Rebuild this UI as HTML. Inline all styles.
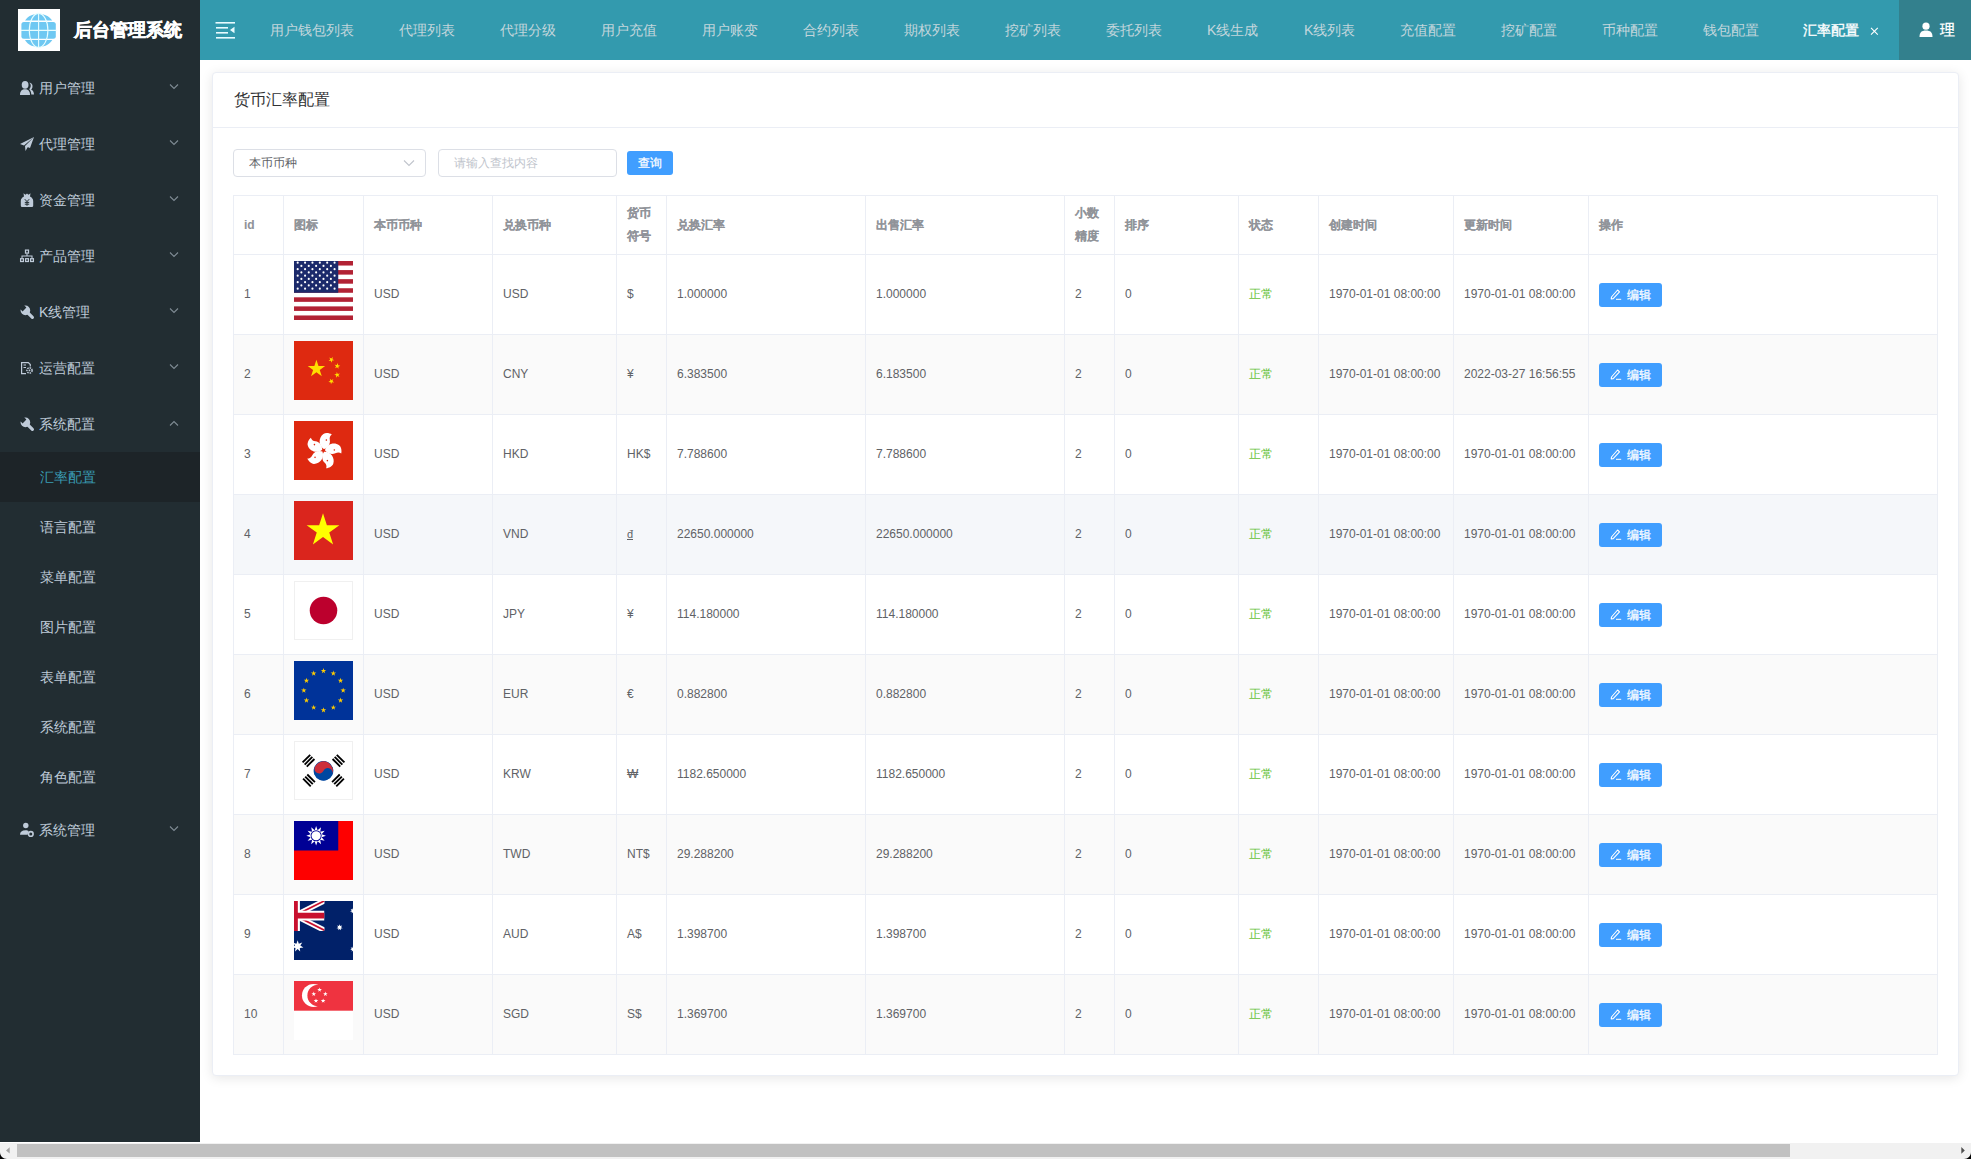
<!DOCTYPE html>
<html><head><meta charset="utf-8"><style>
*{box-sizing:border-box;margin:0;padding:0}
html,body{width:1971px;height:1159px;overflow:hidden;background:#fff;font-family:"Liberation Sans",sans-serif}
#side{position:absolute;left:0;top:0;width:200px;height:1142px;background:#222d32}
#logo{position:absolute;left:18px;top:9px;width:42px;height:42px;background:#fff}
#title{position:absolute;left:74px;top:18px;font-size:18px;font-weight:bold;color:#fff;line-height:24px;white-space:nowrap;-webkit-text-stroke:0.5px #fff}
.mi{position:absolute;left:0;width:200px;height:56px;color:#bfcbd9;font-size:14px}
.mi svg.ic{position:absolute;left:19px;top:20px;width:16px;height:16px}
.mi .tx{position:absolute;left:39px;top:0;line-height:56px;white-space:nowrap}
.mi svg.ar{position:absolute;left:168px;top:20px;width:12px;height:12px}
.mi svg.ar.up{top:21px}
.si{position:absolute;left:0;width:200px;height:50px;color:#bfcbd9;font-size:14px}
.si .tx{position:absolute;left:40px;top:0;line-height:50px;white-space:nowrap}
.si.act{background:#1d2428;color:#3a9db5}
#top{position:absolute;left:200px;top:0;width:1771px;height:60px;background:#339aae}
#user{position:absolute;left:1899px;top:0;width:72px;height:60px;background:#33808d}
.tab{position:absolute;top:0;line-height:60px;font-size:14px;color:#c3d6dc;white-space:nowrap}
.tab.act{color:#fff;-webkit-text-stroke:0.35px #fff}
#card{position:absolute;left:212px;top:72px;width:1747px;height:1004px;border:1px solid #ebeef5;border-radius:4px;background:#fff;box-shadow:0 2px 12px 0 rgba(0,0,0,.1)}
#ch{position:absolute;left:0;top:0;width:100%;height:55px;border-bottom:1px solid #ebeef5}
#ct{position:absolute;left:21px;top:17px;font-size:16px;line-height:20px;color:#303133;white-space:nowrap}
#sel{position:absolute;left:233px;top:149px;width:193px;height:28px;border:1px solid #dcdfe6;border-radius:4px;background:#fff}
#sel .tx{position:absolute;left:15px;top:0;line-height:26px;font-size:12px;color:#606266}
#sel svg{position:absolute;left:169px;top:9px;width:12px;height:8px}
#inp{position:absolute;left:438px;top:149px;width:179px;height:28px;border:1px solid #dcdfe6;border-radius:4px;background:#fff}
#inp .tx{position:absolute;left:15px;top:0;line-height:26px;font-size:12px;color:#c0c4cc}
#qbtn{position:absolute;left:627px;top:151px;width:46px;height:24px;border-radius:3px;background:#409eff;color:#fff;font-size:12px;line-height:24px;text-align:center;-webkit-text-stroke:0.25px #fff}
#tbl{position:absolute;left:233px;top:195px;border-collapse:collapse;table-layout:fixed;width:1705px}
#tbl td,#tbl th{border:1px solid #ebeef5;padding:0 10px;font-size:12px;color:#606266;text-align:left;vertical-align:middle;font-weight:normal;line-height:23px}
#tbl th{color:#909399;font-weight:bold;height:59px;-webkit-text-stroke:0.08px #909399}
#tbl td{height:80px}
#tbl tr.st td{background:#fafafa}
#tbl tr.hv td{background:#f5f7fa}
.ok{color:#67c23a!important}
.eb{display:inline-block;width:63px;height:24px;border-radius:3px;background:#409eff;color:#fff;font-size:12px;line-height:24px;vertical-align:middle;position:relative;top:.5px;padding-left:28px;-webkit-text-stroke:0.25px #fff}
.eb svg{position:absolute;left:11px;top:6px;width:12px;height:12px}
.flag{display:block;width:59px;height:59px;position:relative;top:-4px}
#sb{position:absolute;left:0;top:1142px;width:1971px;height:17px;background:#f1f1f1;border-top:1px solid #fff}
#thumb{position:absolute;left:17px;top:1144px;width:1773px;height:13px;background:#c1c1c1}
</style></head><body>
<div id="side"><div id="logo"><svg viewBox="0 0 42 42" width="42" height="42"><g fill="#6ec8f2"><path d="M7,11.6 C9,8 13,5 20.6,4.9 C28,5 32,8 34.3,11.6 Z"/><rect x="3.4" y="13" width="34.4" height="16.8" rx="2.5"/><path d="M7,31 H34.3 C32,34.6 28,37.8 20.6,38 C13,37.8 9,34.6 7,31 Z"/></g><g fill="none" stroke="#e6fdff" stroke-width="1.1"><ellipse cx="20.6" cy="21.4" rx="9.3" ry="17"/><path d="M20.6,4 V39 M3,21.4 H38.5"/></g></svg></div><div id="title">后台管理系统</div><div class="mi" style="top:60px"><svg class="ic" viewBox="0 0 16 16"><ellipse cx="6.1" cy="4.8" rx="3.4" ry="3.9" fill="#bfcbd9"/><path d="M1,15 C1,11 3,9.3 6,9.3 C9,9.3 11,11 11,15 Z" fill="#bfcbd9"/><path d="M10.3,2.8 C12.6,2.8 14,5 13.4,7.4 C13.1,8.4 12.6,9 12.1,9.4 C14,10.4 15,12 15,14.5 L12.3,14.5 C12.2,12 11.4,10.4 10.2,9.2 C11.6,8 12,6.2 11.6,4.6 C11.3,3.8 10.8,3.2 10.3,2.8 Z" fill="#bfcbd9"/></svg><span class="tx">用户管理</span><svg class="ar" viewBox="0 0 12 12"><path d="M2,4.5 L6,8.5 L10,4.5" fill="none" stroke="#7f8b94" stroke-width="1.1"/></svg></div><div class="mi" style="top:116px"><svg class="ic" viewBox="0 0 16 16"><path d="M15,1 L1,8 L5,9.5 Z M15,1 L6,10 L6.5,15 L8.5,11.5 Z M15,1 L6,10 L11,12 Z" fill="#bfcbd9"/></svg><span class="tx">代理管理</span><svg class="ar" viewBox="0 0 12 12"><path d="M2,4.5 L6,8.5 L10,4.5" fill="none" stroke="#7f8b94" stroke-width="1.1"/></svg></div><div class="mi" style="top:172px"><svg class="ic" viewBox="0 0 16 16"><path d="M4.5,1.3 L6.5,2.8 L8,1.6 L9.5,2.8 L11.5,1.3 L11,4.5 C13,5.5 14.2,7 14.2,9 V13.5 C14.2,14.5 13.5,15 12.5,15 H3.5 C2.5,15 1.8,14.5 1.8,13.5 V9 C1.8,7 3,5.5 5,4.5 Z" fill="#bfcbd9"/><path d="M5.8,7.2 L8,9.6 L10.2,7.2 M8,9.6 V13.8 M5.8,10.4 H10.2 M5.8,12.2 H10.2" stroke="#222d32" stroke-width="1" fill="none"/></svg><span class="tx">资金管理</span><svg class="ar" viewBox="0 0 12 12"><path d="M2,4.5 L6,8.5 L10,4.5" fill="none" stroke="#7f8b94" stroke-width="1.1"/></svg></div><div class="mi" style="top:228px"><svg class="ic" viewBox="0 0 16 16"><rect x="6.5" y="2.1" width="3" height="3" fill="none" stroke="#bfcbd9" stroke-width="1.25"/><path d="M8,5.7 V8 M3,10.1 V8 H13 V10.1" fill="none" stroke="#bfcbd9" stroke-width="1.1"/><rect x="1.6" y="10.7" width="2.8" height="2.8" fill="none" stroke="#bfcbd9" stroke-width="1.25"/><rect x="6.6" y="10.7" width="2.8" height="2.8" fill="none" stroke="#bfcbd9" stroke-width="1.25"/><rect x="11.6" y="10.7" width="2.8" height="2.8" fill="none" stroke="#bfcbd9" stroke-width="1.25"/></svg><span class="tx">产品管理</span><svg class="ar" viewBox="0 0 12 12"><path d="M2,4.5 L6,8.5 L10,4.5" fill="none" stroke="#7f8b94" stroke-width="1.1"/></svg></div><div class="mi" style="top:284px"><svg class="ic" viewBox="0 0 16 16"><circle cx="6.4" cy="6.4" r="4.8" fill="#bfcbd9"/><path d="M6.8,6.8 L13.4,13.4" stroke="#bfcbd9" stroke-width="3.2" stroke-linecap="round"/><path d="M0.8,4.6 L4.6,0.8 L7.4,3.6 L3.6,7.4 Z" fill="#222d32"/></svg><span class="tx">K线管理</span><svg class="ar" viewBox="0 0 12 12"><path d="M2,4.5 L6,8.5 L10,4.5" fill="none" stroke="#7f8b94" stroke-width="1.1"/></svg></div><div class="mi" style="top:340px"><svg class="ic" viewBox="0 0 16 16"><path d="M7,13.6 H2.6 V2.6 H9.3 L11.3,4.6 V6.5" fill="none" stroke="#bfcbd9" stroke-width="1.2"/><path d="M4.5,5 H7 M4.5,7.5 H7" stroke="#bfcbd9" stroke-width="1.1"/><circle cx="10.5" cy="10.4" r="2.6" fill="none" stroke="#bfcbd9" stroke-width="1.5" stroke-dasharray="1.5 0.9"/><circle cx="10.5" cy="10.4" r="0.9" fill="#bfcbd9"/></svg><span class="tx">运营配置</span><svg class="ar" viewBox="0 0 12 12"><path d="M2,4.5 L6,8.5 L10,4.5" fill="none" stroke="#7f8b94" stroke-width="1.1"/></svg></div><div class="mi" style="top:396px"><svg class="ic" viewBox="0 0 16 16"><circle cx="6.4" cy="6.4" r="4.8" fill="#bfcbd9"/><path d="M6.8,6.8 L13.4,13.4" stroke="#bfcbd9" stroke-width="3.2" stroke-linecap="round"/><path d="M0.8,4.6 L4.6,0.8 L7.4,3.6 L3.6,7.4 Z" fill="#222d32"/></svg><span class="tx">系统配置</span><svg class="ar up" viewBox="0 0 12 12"><path d="M2,8.5 L6,4.5 L10,8.5" fill="none" stroke="#7f8b94" stroke-width="1.1"/></svg></div><div class="si act" style="top:452px"><span class="tx">汇率配置</span></div><div class="si" style="top:502px"><span class="tx">语言配置</span></div><div class="si" style="top:552px"><span class="tx">菜单配置</span></div><div class="si" style="top:602px"><span class="tx">图片配置</span></div><div class="si" style="top:652px"><span class="tx">表单配置</span></div><div class="si" style="top:702px"><span class="tx">系统配置</span></div><div class="si" style="top:752px"><span class="tx">角色配置</span></div><div class="mi" style="top:802px"><svg class="ic" viewBox="0 0 16 16"><ellipse cx="6.8" cy="3.5" rx="2.7" ry="2.8" fill="#bfcbd9"/><path d="M1,12.7 C1,10 3,8.3 6.5,8.3 C8,8.3 9,8.6 9.6,9 L8.6,12.7 Z" fill="#bfcbd9"/><circle cx="11.8" cy="11.9" r="2.3" fill="none" stroke="#bfcbd9" stroke-width="1.6"/></svg><span class="tx">系统管理</span><svg class="ar" viewBox="0 0 12 12"><path d="M2,4.5 L6,8.5 L10,4.5" fill="none" stroke="#7f8b94" stroke-width="1.1"/></svg></div></div>
<div id="top"></div><div id="user"></div>
<svg style="position:absolute;left:214px;top:20px" width="22" height="20" viewBox="0 0 22 20"><g fill="#e8fbff"><rect x="1.5" y="2" width="19.5" height="1.6"/><rect x="2" y="7" width="12" height="1.6"/><rect x="2" y="12" width="12" height="1.6"/><rect x="2" y="17" width="19" height="1.6"/><path d="M20.5,6.8 L16,10 L20.5,13.2 Z"/></g></svg><span class="tab" style="left:270px">用户钱包列表</span><span class="tab" style="left:399px">代理列表</span><span class="tab" style="left:500px">代理分级</span><span class="tab" style="left:601px">用户充值</span><span class="tab" style="left:702px">用户账变</span><span class="tab" style="left:803px">合约列表</span><span class="tab" style="left:904px">期权列表</span><span class="tab" style="left:1005px">挖矿列表</span><span class="tab" style="left:1106px">委托列表</span><span class="tab" style="left:1207px">K线生成</span><span class="tab" style="left:1304px">K线列表</span><span class="tab" style="left:1400px">充值配置</span><span class="tab" style="left:1501px">挖矿配置</span><span class="tab" style="left:1602px">币种配置</span><span class="tab" style="left:1703px">钱包配置</span><span class="tab act" style="left:1803px">汇率配置</span><svg style="position:absolute;left:1869px;top:26px" width="10" height="10" viewBox="0 0 10 10"><path d="M2,1.8 L8.8,8.6 M8.8,1.8 L2,8.6" stroke="#fff" stroke-width="1.1"/></svg><svg style="position:absolute;left:1919px;top:22px" width="14" height="15" viewBox="0 0 14 15"><circle cx="7" cy="4.2" r="3.6" fill="#fff"/><path d="M0.5,15 C0.5,10.5 2.5,8.5 7,8.5 C11.5,8.5 13.5,10.5 13.5,15 Z" fill="#fff"/></svg><span class="tab act" style="left:1940px;font-size:15px;top:0px">理</span>
<div id="card"><div id="ch"><span id="ct">货币汇率配置</span></div></div>
<div id="sel"><span class="tx">本币币种</span><svg viewBox="0 0 12 8"><path d="M1,1.5 L6,6.5 L11,1.5" fill="none" stroke="#c0c4cc" stroke-width="1.1"/></svg></div>
<div id="inp"><span class="tx">请输入查找内容</span></div>
<div id="qbtn">查询</div>
<table id="tbl"><colgroup><col style="width:50px"><col style="width:80px"><col style="width:129px"><col style="width:124px"><col style="width:50px"><col style="width:199px"><col style="width:199px"><col style="width:50px"><col style="width:124px"><col style="width:80px"><col style="width:135px"><col style="width:135px"><col style="width:349px"></colgroup>
<tr><th>id</th><th>图标</th><th>本币币种</th><th>兑换币种</th><th>货币符号</th><th>兑换汇率</th><th>出售汇率</th><th>小数精度</th><th>排序</th><th>状态</th><th>创建时间</th><th>更新时间</th><th>操作</th></tr>
<tr><td>1</td><td><svg class="flag" viewBox="0 0 60 60" preserveAspectRatio="none"><rect width="60" height="60" fill="#fff"/><rect y="0.000" width="60" height="4.615" fill="#b22234"/><rect y="9.231" width="60" height="4.615" fill="#b22234"/><rect y="18.462" width="60" height="4.615" fill="#b22234"/><rect y="27.692" width="60" height="4.615" fill="#b22234"/><rect y="36.923" width="60" height="4.615" fill="#b22234"/><rect y="46.154" width="60" height="4.615" fill="#b22234"/><rect y="55.385" width="60" height="4.615" fill="#b22234"/><rect width="45" height="32.308" fill="#1c2a6b"/><circle cx="3.75" cy="1.70" r="1.1" fill="#fff"/><circle cx="11.25" cy="1.70" r="1.1" fill="#fff"/><circle cx="18.75" cy="1.70" r="1.1" fill="#fff"/><circle cx="26.25" cy="1.70" r="1.1" fill="#fff"/><circle cx="33.75" cy="1.70" r="1.1" fill="#fff"/><circle cx="41.25" cy="1.70" r="1.1" fill="#fff"/><circle cx="7.50" cy="5.00" r="1.1" fill="#fff"/><circle cx="15.00" cy="5.00" r="1.1" fill="#fff"/><circle cx="22.50" cy="5.00" r="1.1" fill="#fff"/><circle cx="30.00" cy="5.00" r="1.1" fill="#fff"/><circle cx="37.50" cy="5.00" r="1.1" fill="#fff"/><circle cx="3.75" cy="8.30" r="1.1" fill="#fff"/><circle cx="11.25" cy="8.30" r="1.1" fill="#fff"/><circle cx="18.75" cy="8.30" r="1.1" fill="#fff"/><circle cx="26.25" cy="8.30" r="1.1" fill="#fff"/><circle cx="33.75" cy="8.30" r="1.1" fill="#fff"/><circle cx="41.25" cy="8.30" r="1.1" fill="#fff"/><circle cx="7.50" cy="11.60" r="1.1" fill="#fff"/><circle cx="15.00" cy="11.60" r="1.1" fill="#fff"/><circle cx="22.50" cy="11.60" r="1.1" fill="#fff"/><circle cx="30.00" cy="11.60" r="1.1" fill="#fff"/><circle cx="37.50" cy="11.60" r="1.1" fill="#fff"/><circle cx="3.75" cy="14.90" r="1.1" fill="#fff"/><circle cx="11.25" cy="14.90" r="1.1" fill="#fff"/><circle cx="18.75" cy="14.90" r="1.1" fill="#fff"/><circle cx="26.25" cy="14.90" r="1.1" fill="#fff"/><circle cx="33.75" cy="14.90" r="1.1" fill="#fff"/><circle cx="41.25" cy="14.90" r="1.1" fill="#fff"/><circle cx="7.50" cy="18.20" r="1.1" fill="#fff"/><circle cx="15.00" cy="18.20" r="1.1" fill="#fff"/><circle cx="22.50" cy="18.20" r="1.1" fill="#fff"/><circle cx="30.00" cy="18.20" r="1.1" fill="#fff"/><circle cx="37.50" cy="18.20" r="1.1" fill="#fff"/><circle cx="3.75" cy="21.50" r="1.1" fill="#fff"/><circle cx="11.25" cy="21.50" r="1.1" fill="#fff"/><circle cx="18.75" cy="21.50" r="1.1" fill="#fff"/><circle cx="26.25" cy="21.50" r="1.1" fill="#fff"/><circle cx="33.75" cy="21.50" r="1.1" fill="#fff"/><circle cx="41.25" cy="21.50" r="1.1" fill="#fff"/><circle cx="7.50" cy="24.80" r="1.1" fill="#fff"/><circle cx="15.00" cy="24.80" r="1.1" fill="#fff"/><circle cx="22.50" cy="24.80" r="1.1" fill="#fff"/><circle cx="30.00" cy="24.80" r="1.1" fill="#fff"/><circle cx="37.50" cy="24.80" r="1.1" fill="#fff"/><circle cx="3.75" cy="28.10" r="1.1" fill="#fff"/><circle cx="11.25" cy="28.10" r="1.1" fill="#fff"/><circle cx="18.75" cy="28.10" r="1.1" fill="#fff"/><circle cx="26.25" cy="28.10" r="1.1" fill="#fff"/><circle cx="33.75" cy="28.10" r="1.1" fill="#fff"/><circle cx="41.25" cy="28.10" r="1.1" fill="#fff"/></svg></td><td>USD</td><td>USD</td><td>$</td><td>1.000000</td><td>1.000000</td><td>2</td><td>0</td><td class="ok">正常</td><td>1970-01-01 08:00:00</td><td>1970-01-01 08:00:00</td><td><span class="eb"><svg viewBox="0 0 12 12"><path d="M7.6,1 L9.5,2.8 L3.2,9.6 L1.2,10 L1.5,8 Z" fill="none" stroke="#fff" stroke-width="1.1" stroke-linejoin="round"/><path d="M6,10.3 H11.2" stroke="#fff" stroke-width="1"/></svg>编辑</span></td></tr><tr class="st"><td>2</td><td><svg class="flag" viewBox="0 0 60 60" preserveAspectRatio="none"><rect width="60" height="60" fill="#de2910"/><polygon points="22.80,19.00 24.89,25.43 31.64,25.43 26.18,29.40 28.27,35.82 22.80,31.85 17.33,35.82 19.42,29.40 13.96,25.43 20.71,25.43" fill="#ffde00"/><polygon points="39.55,16.32 39.08,18.52 41.03,19.64 38.79,19.88 38.32,22.08 37.41,20.03 35.17,20.26 36.84,18.75 35.93,16.70 37.88,17.82" fill="#ffde00"/><polygon points="44.54,22.45 44.85,24.68 47.07,25.07 45.05,26.06 45.36,28.29 43.79,26.67 41.77,27.65 42.83,25.66 41.26,24.04 43.48,24.44" fill="#ffde00"/><polygon points="43.46,31.45 44.52,33.44 46.74,33.04 45.17,34.66 46.23,36.65 44.21,35.67 42.64,37.29 42.95,35.06 40.93,34.07 43.15,33.68" fill="#ffde00"/><polygon points="36.45,38.32 38.12,39.82 40.07,38.70 39.16,40.75 40.83,42.26 38.59,42.03 37.68,44.08 37.21,41.88 34.97,41.64 36.92,40.52" fill="#ffde00"/></svg></td><td>USD</td><td>CNY</td><td>¥</td><td>6.383500</td><td>6.183500</td><td>2</td><td>0</td><td class="ok">正常</td><td>1970-01-01 08:00:00</td><td>2022-03-27 16:56:55</td><td><span class="eb"><svg viewBox="0 0 12 12"><path d="M7.6,1 L9.5,2.8 L3.2,9.6 L1.2,10 L1.5,8 Z" fill="none" stroke="#fff" stroke-width="1.1" stroke-linejoin="round"/><path d="M6,10.3 H11.2" stroke="#fff" stroke-width="1"/></svg>编辑</span></td></tr><tr><td>3</td><td><svg class="flag" viewBox="0 0 60 60" preserveAspectRatio="none"><rect width="60" height="60" fill="#de2910"/><path d="M0,-1.5 C-6,-4 -7.5,-12 -3,-16.5 C-1,-18.5 3,-18.5 5.5,-17.5 C4,-16 3.5,-14 4.5,-11.5 C6,-8 3.5,-3 0,-1.5 Z" fill="#fff" transform="translate(30,30) rotate(10) "/><circle cx="1" cy="-11" r="0.8" fill="#de2910" transform="translate(30,30) rotate(10)"/><path d="M0,-1.5 C-6,-4 -7.5,-12 -3,-16.5 C-1,-18.5 3,-18.5 5.5,-17.5 C4,-16 3.5,-14 4.5,-11.5 C6,-8 3.5,-3 0,-1.5 Z" fill="#fff" transform="translate(30,30) rotate(82) "/><circle cx="1" cy="-11" r="0.8" fill="#de2910" transform="translate(30,30) rotate(82)"/><path d="M0,-1.5 C-6,-4 -7.5,-12 -3,-16.5 C-1,-18.5 3,-18.5 5.5,-17.5 C4,-16 3.5,-14 4.5,-11.5 C6,-8 3.5,-3 0,-1.5 Z" fill="#fff" transform="translate(30,30) rotate(154) "/><circle cx="1" cy="-11" r="0.8" fill="#de2910" transform="translate(30,30) rotate(154)"/><path d="M0,-1.5 C-6,-4 -7.5,-12 -3,-16.5 C-1,-18.5 3,-18.5 5.5,-17.5 C4,-16 3.5,-14 4.5,-11.5 C6,-8 3.5,-3 0,-1.5 Z" fill="#fff" transform="translate(30,30) rotate(226) "/><circle cx="1" cy="-11" r="0.8" fill="#de2910" transform="translate(30,30) rotate(226)"/><path d="M0,-1.5 C-6,-4 -7.5,-12 -3,-16.5 C-1,-18.5 3,-18.5 5.5,-17.5 C4,-16 3.5,-14 4.5,-11.5 C6,-8 3.5,-3 0,-1.5 Z" fill="#fff" transform="translate(30,30) rotate(298) "/><circle cx="1" cy="-11" r="0.8" fill="#de2910" transform="translate(30,30) rotate(298)"/></svg></td><td>USD</td><td>HKD</td><td>HK$</td><td>7.788600</td><td>7.788600</td><td>2</td><td>0</td><td class="ok">正常</td><td>1970-01-01 08:00:00</td><td>1970-01-01 08:00:00</td><td><span class="eb"><svg viewBox="0 0 12 12"><path d="M7.6,1 L9.5,2.8 L3.2,9.6 L1.2,10 L1.5,8 Z" fill="none" stroke="#fff" stroke-width="1.1" stroke-linejoin="round"/><path d="M6,10.3 H11.2" stroke="#fff" stroke-width="1"/></svg>编辑</span></td></tr><tr class="hv"><td>4</td><td><svg class="flag" viewBox="0 0 60 60" preserveAspectRatio="none"><rect width="60" height="60" fill="#da251d"/><polygon points="29.50,12.50 33.43,24.59 46.14,24.59 35.86,32.07 39.79,44.16 29.50,36.69 19.21,44.16 23.14,32.07 12.86,24.59 25.57,24.59" fill="#ffff00"/></svg></td><td>USD</td><td>VND</td><td><span style="display:inline-block;border-bottom:1px solid #606266;line-height:9px;font-size:11px">đ</span></td><td>22650.000000</td><td>22650.000000</td><td>2</td><td>0</td><td class="ok">正常</td><td>1970-01-01 08:00:00</td><td>1970-01-01 08:00:00</td><td><span class="eb"><svg viewBox="0 0 12 12"><path d="M7.6,1 L9.5,2.8 L3.2,9.6 L1.2,10 L1.5,8 Z" fill="none" stroke="#fff" stroke-width="1.1" stroke-linejoin="round"/><path d="M6,10.3 H11.2" stroke="#fff" stroke-width="1"/></svg>编辑</span></td></tr><tr><td>5</td><td><svg class="flag" viewBox="0 0 60 60" preserveAspectRatio="none"><rect x="0.5" y="0.5" width="59" height="59" fill="#fff" stroke="#f0f0f0" stroke-width="1"/><circle cx="30" cy="30" r="14" fill="#bc002d"/></svg></td><td>USD</td><td>JPY</td><td>¥</td><td>114.180000</td><td>114.180000</td><td>2</td><td>0</td><td class="ok">正常</td><td>1970-01-01 08:00:00</td><td>1970-01-01 08:00:00</td><td><span class="eb"><svg viewBox="0 0 12 12"><path d="M7.6,1 L9.5,2.8 L3.2,9.6 L1.2,10 L1.5,8 Z" fill="none" stroke="#fff" stroke-width="1.1" stroke-linejoin="round"/><path d="M6,10.3 H11.2" stroke="#fff" stroke-width="1"/></svg>编辑</span></td></tr><tr class="st"><td>6</td><td><svg class="flag" viewBox="0 0 60 60" preserveAspectRatio="none"><rect width="60" height="60" fill="#003399"/><polygon points="30.00,7.10 30.65,9.10 32.76,9.10 31.05,10.34 31.70,12.35 30.00,11.11 28.30,12.35 28.95,10.34 27.24,9.10 29.35,9.10" fill="#ffcc00"/><polygon points="40.00,9.78 40.65,11.78 42.76,11.78 41.05,13.02 41.70,15.03 40.00,13.79 38.30,15.03 38.95,13.02 37.24,11.78 39.35,11.78" fill="#ffcc00"/><polygon points="47.32,17.10 47.97,19.10 50.08,19.10 48.37,20.34 49.03,22.35 47.32,21.11 45.62,22.35 46.27,20.34 44.56,19.10 46.67,19.10" fill="#ffcc00"/><polygon points="50.00,27.10 50.65,29.10 52.76,29.10 51.05,30.34 51.70,32.35 50.00,31.11 48.30,32.35 48.95,30.34 47.24,29.10 49.35,29.10" fill="#ffcc00"/><polygon points="47.32,37.10 47.97,39.10 50.08,39.10 48.37,40.34 49.03,42.35 47.32,41.11 45.62,42.35 46.27,40.34 44.56,39.10 46.67,39.10" fill="#ffcc00"/><polygon points="40.00,44.42 40.65,46.42 42.76,46.42 41.05,47.66 41.70,49.67 40.00,48.43 38.30,49.67 38.95,47.66 37.24,46.42 39.35,46.42" fill="#ffcc00"/><polygon points="30.00,47.10 30.65,49.10 32.76,49.10 31.05,50.34 31.70,52.35 30.00,51.11 28.30,52.35 28.95,50.34 27.24,49.10 29.35,49.10" fill="#ffcc00"/><polygon points="20.00,44.42 20.65,46.42 22.76,46.42 21.05,47.66 21.70,49.67 20.00,48.43 18.30,49.67 18.95,47.66 17.24,46.42 19.35,46.42" fill="#ffcc00"/><polygon points="12.68,37.10 13.33,39.10 15.44,39.10 13.73,40.34 14.38,42.35 12.68,41.11 10.97,42.35 11.63,40.34 9.92,39.10 12.03,39.10" fill="#ffcc00"/><polygon points="10.00,27.10 10.65,29.10 12.76,29.10 11.05,30.34 11.70,32.35 10.00,31.11 8.30,32.35 8.95,30.34 7.24,29.10 9.35,29.10" fill="#ffcc00"/><polygon points="12.68,17.10 13.33,19.10 15.44,19.10 13.73,20.34 14.38,22.35 12.68,21.11 10.97,22.35 11.63,20.34 9.92,19.10 12.03,19.10" fill="#ffcc00"/><polygon points="20.00,9.78 20.65,11.78 22.76,11.78 21.05,13.02 21.70,15.03 20.00,13.79 18.30,15.03 18.95,13.02 17.24,11.78 19.35,11.78" fill="#ffcc00"/></svg></td><td>USD</td><td>EUR</td><td>€</td><td>0.882800</td><td>0.882800</td><td>2</td><td>0</td><td class="ok">正常</td><td>1970-01-01 08:00:00</td><td>1970-01-01 08:00:00</td><td><span class="eb"><svg viewBox="0 0 12 12"><path d="M7.6,1 L9.5,2.8 L3.2,9.6 L1.2,10 L1.5,8 Z" fill="none" stroke="#fff" stroke-width="1.1" stroke-linejoin="round"/><path d="M6,10.3 H11.2" stroke="#fff" stroke-width="1"/></svg>编辑</span></td></tr><tr><td>7</td><td><svg class="flag" viewBox="0 0 60 60" preserveAspectRatio="none"><rect x="0.5" y="0.5" width="59" height="59" fill="#fff" stroke="#f0f0f0" stroke-width="1"/><g transform="translate(30,30.3) rotate(25)"><circle r="10" fill="#0047a0"/><circle r="9.6" fill="#0047a0"/><path d="M-9.6,0 A9.6,9.6 0 0 1 9.6,0 A4.8,4.8 0 0 0 0,0 A4.8,4.8 0 0 1 -9.6,0 Z" fill="#cd2e3a"/></g><g transform="translate(15,20.3) rotate(-45)"><rect x="-5.5" y="-4.30" width="11" height="1.9" fill="#000"/><rect x="-5.5" y="-1.30" width="11" height="1.9" fill="#000"/><rect x="-5.5" y="1.70" width="11" height="1.9" fill="#000"/></g><g transform="translate(45,20.3) rotate(45)"><rect x="-5.5" y="-4.30" width="11" height="1.9" fill="#000"/><rect x="-5.5" y="-1.30" width="11" height="1.9" fill="#000"/><rect x="-5.5" y="1.70" width="11" height="1.9" fill="#000"/></g><g transform="translate(15,40.3) rotate(45)"><rect x="-5.5" y="-4.30" width="11" height="1.9" fill="#000"/><rect x="-5.5" y="-1.30" width="11" height="1.9" fill="#000"/><rect x="-5.5" y="1.70" width="11" height="1.9" fill="#000"/></g><g transform="translate(45,40.3) rotate(-45)"><rect x="-5.5" y="-4.30" width="11" height="1.9" fill="#000"/><rect x="-5.5" y="-1.30" width="11" height="1.9" fill="#000"/><rect x="-5.5" y="1.70" width="11" height="1.9" fill="#000"/></g></svg></td><td>USD</td><td>KRW</td><td>₩</td><td>1182.650000</td><td>1182.650000</td><td>2</td><td>0</td><td class="ok">正常</td><td>1970-01-01 08:00:00</td><td>1970-01-01 08:00:00</td><td><span class="eb"><svg viewBox="0 0 12 12"><path d="M7.6,1 L9.5,2.8 L3.2,9.6 L1.2,10 L1.5,8 Z" fill="none" stroke="#fff" stroke-width="1.1" stroke-linejoin="round"/><path d="M6,10.3 H11.2" stroke="#fff" stroke-width="1"/></svg>编辑</span></td></tr><tr class="st"><td>8</td><td><svg class="flag" viewBox="0 0 60 60" preserveAspectRatio="none"><rect width="60" height="60" fill="#fe0000"/><rect width="45" height="30" fill="#000095"/><polygon points="32.50,15.00 28.10,16.50 31.16,20.00 26.60,19.10 27.50,23.66 24.00,20.60 22.50,25.00 21.00,20.60 17.50,23.66 18.40,19.10 13.84,20.00 16.90,16.50 12.50,15.00 16.90,13.50 13.84,10.00 18.40,10.90 17.50,6.34 21.00,9.40 22.50,5.00 24.00,9.40 27.50,6.34 26.60,10.90 31.16,10.00 28.10,13.50" fill="#fff"/><circle cx="22.5" cy="15" r="5.6" fill="#000095"/><circle cx="22.5" cy="15" r="4.7" fill="#fff"/></svg></td><td>USD</td><td>TWD</td><td>NT$</td><td>29.288200</td><td>29.288200</td><td>2</td><td>0</td><td class="ok">正常</td><td>1970-01-01 08:00:00</td><td>1970-01-01 08:00:00</td><td><span class="eb"><svg viewBox="0 0 12 12"><path d="M7.6,1 L9.5,2.8 L3.2,9.6 L1.2,10 L1.5,8 Z" fill="none" stroke="#fff" stroke-width="1.1" stroke-linejoin="round"/><path d="M6,10.3 H11.2" stroke="#fff" stroke-width="1"/></svg>编辑</span></td></tr><tr><td>9</td><td><svg class="flag" viewBox="0 0 60 60" preserveAspectRatio="none"><rect width="60" height="60" fill="#012169"/><clipPath id="auc"><rect width="31" height="30.4"/></clipPath><g clip-path="url(#auc)"><path d="M-29,29.8 L31,-0.2 M-29,-0.2 L31,29.8" stroke="#fff" stroke-width="5.5"/><path d="M-29,29.8 L31,-0.2 M-29,-0.2 L31,29.8" stroke="#c8102e" stroke-width="1.8"/><path d="M1,0 V30.4 M-30,14.8 H31" stroke="#fff" stroke-width="10"/><path d="M1,0 V30.4 M-30,14.8 H31" stroke="#c8102e" stroke-width="5.8"/></g><polygon points="3.70,40.00 4.91,43.48 8.39,42.26 6.43,45.38 9.55,47.34 5.89,47.75 6.30,51.41 3.70,48.80 1.10,51.41 1.51,47.75 -2.15,47.34 0.97,45.38 -0.99,42.26 2.49,43.48" fill="#fff"/><polygon points="46.40,23.70 47.05,25.55 48.90,24.90 47.86,26.57 49.52,27.61 47.57,27.84 47.79,29.78 46.40,28.40 45.01,29.78 45.23,27.84 43.28,27.61 44.94,26.57 43.90,24.90 45.75,25.55" fill="#fff"/><polygon points="60.00,7.00 60.61,8.74 62.35,8.13 61.36,9.69 62.92,10.67 61.09,10.87 61.30,12.70 60.00,11.40 58.70,12.70 58.91,10.87 57.08,10.67 58.64,9.69 57.65,8.13 59.39,8.74" fill="#fff"/><polygon points="60.00,46.00 60.61,47.74 62.35,47.13 61.36,48.69 62.92,49.67 61.09,49.87 61.30,51.70 60.00,50.40 58.70,51.70 58.91,49.87 57.08,49.67 58.64,48.69 57.65,47.13 59.39,47.74" fill="#fff"/></svg></td><td>USD</td><td>AUD</td><td>A$</td><td>1.398700</td><td>1.398700</td><td>2</td><td>0</td><td class="ok">正常</td><td>1970-01-01 08:00:00</td><td>1970-01-01 08:00:00</td><td><span class="eb"><svg viewBox="0 0 12 12"><path d="M7.6,1 L9.5,2.8 L3.2,9.6 L1.2,10 L1.5,8 Z" fill="none" stroke="#fff" stroke-width="1.1" stroke-linejoin="round"/><path d="M6,10.3 H11.2" stroke="#fff" stroke-width="1"/></svg>编辑</span></td></tr><tr class="st"><td>10</td><td><svg class="flag" viewBox="0 0 60 60" preserveAspectRatio="none"><rect width="60" height="60" fill="#fff"/><rect width="60" height="30.2" fill="#ef3340"/><circle cx="19.8" cy="14.7" r="11.7" fill="#fff"/><circle cx="24.6" cy="14.7" r="11" fill="#ef3340"/><polygon points="26.00,6.50 26.56,8.23 28.38,8.23 26.91,9.30 27.47,11.02 26.00,9.96 24.53,11.02 25.09,9.30 23.62,8.23 25.44,8.23" fill="#fff"/><polygon points="31.90,10.78 32.46,12.51 34.27,12.51 32.80,13.58 33.37,15.31 31.90,14.24 30.43,15.31 30.99,13.58 29.52,12.51 31.34,12.51" fill="#fff"/><polygon points="29.64,17.72 30.21,19.44 32.02,19.44 30.55,20.51 31.11,22.24 29.64,21.17 28.17,22.24 28.74,20.51 27.27,19.44 29.08,19.44" fill="#fff"/><polygon points="22.36,17.72 22.92,19.44 24.73,19.44 23.26,20.51 23.83,22.24 22.36,21.17 20.89,22.24 21.45,20.51 19.98,19.44 21.79,19.44" fill="#fff"/><polygon points="20.10,10.78 20.66,12.51 22.48,12.51 21.01,13.58 21.57,15.31 20.10,14.24 18.63,15.31 19.20,13.58 17.73,12.51 19.54,12.51" fill="#fff"/></svg></td><td>USD</td><td>SGD</td><td>S$</td><td>1.369700</td><td>1.369700</td><td>2</td><td>0</td><td class="ok">正常</td><td>1970-01-01 08:00:00</td><td>1970-01-01 08:00:00</td><td><span class="eb"><svg viewBox="0 0 12 12"><path d="M7.6,1 L9.5,2.8 L3.2,9.6 L1.2,10 L1.5,8 Z" fill="none" stroke="#fff" stroke-width="1.1" stroke-linejoin="round"/><path d="M6,10.3 H11.2" stroke="#fff" stroke-width="1"/></svg>编辑</span></td></tr>
</table>
<div id="sb"></div><div id="thumb"></div>
<svg style="position:absolute;left:0;top:1142px" width="1971" height="17" viewBox="0 0 1971 17"><path d="M6,8.4 L9.7,5.2 L9.7,11.6 Z" fill="#a3a3a3"/><path d="M1961.3,5 L1964.8,8.4 L1961.3,11.8 Z" fill="#505050"/><path d="M0,10 C0,14 3,17 7,17 L0,17 Z" fill="#000"/><path d="M1971,10 C1971,14 1968,17 1964,17 L1971,17 Z" fill="#000"/></svg>
</body></html>
